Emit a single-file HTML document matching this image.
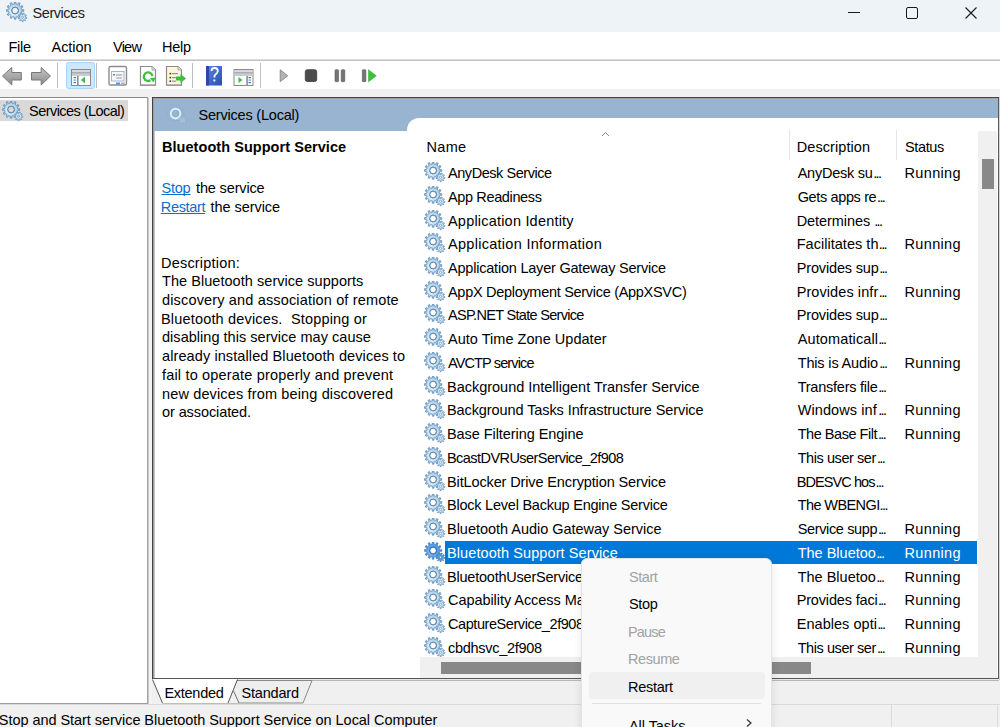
<!DOCTYPE html>
<html><head><meta charset="utf-8">
<style>
*{margin:0;padding:0;box-sizing:border-box}
html,body{width:1000px;height:727px;overflow:hidden;background:#f0f0f0;font-family:"Liberation Sans",sans-serif;font-size:14.5px;color:#000;position:relative}
.a{position:absolute}
.t{position:absolute;white-space:nowrap;line-height:16px}
.gi{position:absolute;left:424px;width:24px;height:24px}
</style></head><body>
<svg width="0" height="0" style="position:absolute">
<defs>
<radialGradient id="gb" cx="9.1" cy="8.5" r="9" fx="7" fy="10.5" gradientUnits="userSpaceOnUse"><stop offset="0" stop-color="#eefaff"/><stop offset="0.5" stop-color="#c8e8f8"/><stop offset="0.76" stop-color="#a8cbe6"/><stop offset="1" stop-color="#6f9cc8"/></radialGradient>
<radialGradient id="gs" cx="16.5" cy="15.3" r="5" gradientUnits="userSpaceOnUse"><stop offset="0" stop-color="#eef8fd"/><stop offset="0.6" stop-color="#c4def0"/><stop offset="1" stop-color="#8cb0d2"/></radialGradient>
<radialGradient id="gsel" cx="9.1" cy="8.5" r="9" fx="7" fy="10.5" gradientUnits="userSpaceOnUse"><stop offset="0" stop-color="#9ccbf3"/><stop offset="1" stop-color="#3c86d6"/></radialGradient>
<symbol id="gear" viewBox="0 0 24 24">
<path d="M15.65,7.67L17.76,7.68L17.76,9.32L15.65,9.33L15.18,11.06L17.01,12.12L16.19,13.54L14.36,12.49L13.09,13.76L14.14,15.59L12.72,16.41L11.66,14.58L9.93,15.05L9.92,17.16L8.28,17.16L8.27,15.05L6.54,14.58L5.48,16.41L4.06,15.59L5.11,13.76L3.84,12.49L2.01,13.54L1.19,12.12L3.02,11.06L2.55,9.33L0.44,9.32L0.44,7.68L2.55,7.67L3.02,5.94L1.19,4.88L2.01,3.46L3.84,4.51L5.11,3.24L4.06,1.41L5.48,0.59L6.54,2.42L8.27,1.95L8.28,-0.16L9.92,-0.16L9.93,1.95L11.66,2.42L12.72,0.59L14.14,1.41L13.09,3.24L14.36,4.51L16.19,3.46L17.01,4.88L15.18,5.94Z M12.3,8.5 A3.2,3.2 0 1 0 5.9,8.5 A3.2,3.2 0 1 0 12.3,8.5 Z" fill-rule="evenodd" fill="url(#gb)" stroke="#6a92ba" stroke-width="0.85"/>
<circle cx="9.1" cy="8.5" r="3.5" fill="none" stroke="#6c88a8" stroke-width="1"/>
<path d="M19.50,15.24L20.90,15.39L20.75,16.42L19.37,16.19L18.84,17.18L19.81,18.20L19.04,18.90L18.13,17.82L17.08,18.24L17.17,19.65L16.13,19.68L16.12,18.28L15.05,17.93L14.22,19.06L13.40,18.42L14.30,17.34L13.70,16.38L12.33,16.72L12.12,15.70L13.50,15.45L13.66,14.33L12.40,13.71L12.89,12.79L14.11,13.49L14.95,12.73L14.38,11.44L15.35,11.05L15.84,12.37L16.96,12.34L17.35,10.98L18.35,11.31L17.87,12.63L18.76,13.32L19.93,12.54L20.48,13.43L19.27,14.14Z M17.6,15.3 A1.1,1.1 0 1 0 15.4,15.3 A1.1,1.1 0 1 0 17.6,15.3 Z" fill-rule="evenodd" fill="url(#gs)" stroke="#7099c0" stroke-width="0.8"/>
</symbol>
<symbol id="gearsel" viewBox="0 0 24 24">
<path d="M15.65,7.67L17.76,7.68L17.76,9.32L15.65,9.33L15.18,11.06L17.01,12.12L16.19,13.54L14.36,12.49L13.09,13.76L14.14,15.59L12.72,16.41L11.66,14.58L9.93,15.05L9.92,17.16L8.28,17.16L8.27,15.05L6.54,14.58L5.48,16.41L4.06,15.59L5.11,13.76L3.84,12.49L2.01,13.54L1.19,12.12L3.02,11.06L2.55,9.33L0.44,9.32L0.44,7.68L2.55,7.67L3.02,5.94L1.19,4.88L2.01,3.46L3.84,4.51L5.11,3.24L4.06,1.41L5.48,0.59L6.54,2.42L8.27,1.95L8.28,-0.16L9.92,-0.16L9.93,1.95L11.66,2.42L12.72,0.59L14.14,1.41L13.09,3.24L14.36,4.51L16.19,3.46L17.01,4.88L15.18,5.94Z M12.3,8.5 A3.2,3.2 0 1 0 5.9,8.5 A3.2,3.2 0 1 0 12.3,8.5 Z" fill-rule="evenodd" fill="url(#gsel)" stroke="#3a7cc8" stroke-width="0.7"/>
<circle cx="9.1" cy="8.5" r="3.6" fill="none" stroke="#2f6fb8" stroke-width="1"/>
<path d="M19.50,15.24L20.90,15.39L20.75,16.42L19.37,16.19L18.84,17.18L19.81,18.20L19.04,18.90L18.13,17.82L17.08,18.24L17.17,19.65L16.13,19.68L16.12,18.28L15.05,17.93L14.22,19.06L13.40,18.42L14.30,17.34L13.70,16.38L12.33,16.72L12.12,15.70L13.50,15.45L13.66,14.33L12.40,13.71L12.89,12.79L14.11,13.49L14.95,12.73L14.38,11.44L15.35,11.05L15.84,12.37L16.96,12.34L17.35,10.98L18.35,11.31L17.87,12.63L18.76,13.32L19.93,12.54L20.48,13.43L19.27,14.14Z M17.6,15.3 A1.1,1.1 0 1 0 15.4,15.3 A1.1,1.1 0 1 0 17.6,15.3 Z" fill-rule="evenodd" fill="#5a9ee0" stroke="#3f82cc" stroke-width="0.7"/>
</symbol>
</defs></svg>
<div class="a" style="left:0;top:0;width:1000px;height:32px;background:#eef3f7"></div>
<svg class="a" style="left:6px;top:2px" width="24" height="24"><use href="#gear"/></svg>
<div class="a" style="left:848px;top:12px;width:12px;height:1px;background:#1a1a1a"></div>
<div class="a" style="left:906px;top:7px;width:12px;height:12px;border:1px solid #1a1a1a;border-radius:2px"></div>
<svg class="a" style="left:964px;top:6px" width="14" height="14"><path d="M1.5,1.5L12.5,12.5M12.5,1.5L1.5,12.5" stroke="#1a1a1a" stroke-width="1.1"/></svg>
<div class="a" style="left:0;top:32px;width:1000px;height:27px;background:#fff"></div>
<div class="a" style="left:0;top:59px;width:1000px;height:1px;background:#dcdcdc"></div>
<div class="a" style="left:0;top:60px;width:1000px;height:1px;background:#c4c4c4"></div>
<div class="a" style="left:0;top:61px;width:1000px;height:28px;background:#fff"></div>

<svg class="a" style="left:0;top:60px" width="400" height="30" viewBox="0 60 400 30">
<defs>
<linearGradient id="ar" x1="0" y1="0" x2="0" y2="1"><stop offset="0" stop-color="#c4c4c4"/><stop offset="1" stop-color="#8c8c8c"/></linearGradient>
<linearGradient id="hb" x1="0" y1="0" x2="1" y2="1"><stop offset="0" stop-color="#5a86e0"/><stop offset="1" stop-color="#2c4cb4"/></linearGradient>
</defs>
<!-- back -->
<path d="M2.5,76 L11.8,67.5 L11.8,72.5 L21.3,72.5 L21.3,80 L11.8,80 L11.8,85 Z" fill="url(#ar)" stroke="#777" stroke-width="1" stroke-linejoin="round"/>
<path d="M50.5,76 L41.2,67.5 L41.2,72.5 L31.5,72.5 L31.5,80 L41.2,80 L41.2,85 Z" fill="url(#ar)" stroke="#777" stroke-width="1" stroke-linejoin="round"/>
<rect x="57" y="63" width="1" height="25" fill="#bdbdbd"/>
<!-- toggle -->
<rect x="66.5" y="62.5" width="28" height="26" rx="2" fill="#cce8ff" stroke="#a6d4fa"/>
<rect x="71.5" y="69.5" width="19" height="16" fill="#fff" stroke="#8a8a8a"/>
<rect x="72" y="70" width="18" height="2.5" fill="#d8d8d8"/>
<rect x="72" y="72.5" width="18" height="1" fill="#6e6e80"/>
<rect x="72" y="73.5" width="18" height="2.5" fill="#c6ccd6"/>
<rect x="77" y="76" width="1.6" height="9.5" fill="#8a8e98"/>
<rect x="73.5" y="77" width="2.5" height="1.2" fill="#3b7cc4"/>
<rect x="73.5" y="79.5" width="2.5" height="1.2" fill="#6e9cd0"/>
<rect x="73.5" y="82" width="2.5" height="1.2" fill="#3b7cc4"/>
<path d="M81,80 L85,76.5 L85,83.5 Z" fill="#3cbf3c"/>
<rect x="96" y="63" width="1" height="25" fill="#bdbdbd"/>
<!-- properties -->
<rect x="109" y="66.5" width="17.5" height="18.5" rx="1.5" fill="#fff" stroke="#8c8c8c" stroke-width="1.4"/>
<rect x="111.5" y="71.5" width="12.5" height="9.5" fill="#f6f8fb" stroke="#a9b4c4" stroke-width="1"/>
<rect x="116" y="74.5" width="6" height="1" fill="#8c8c8c"/>
<rect x="116" y="77.5" width="6" height="1" fill="#9a9a9a"/>
<rect x="113" y="74" width="2" height="1.5" fill="#3a8ee6"/>
<rect x="116" y="82.5" width="4" height="2" fill="#3a9af0"/>
<rect x="121" y="82.5" width="4" height="2" fill="#b0b0b0"/>
<!-- refresh doc -->
<path d="M140.5,66.5 L152,66.5 L155.5,70 L155.5,85.5 L140.5,85.5 Z" fill="#fff" stroke="#8c8c8c" stroke-width="1.2"/><rect x="140" y="84.3" width="16" height="1.7" fill="#9a9a9a"/>
<path d="M152,66.5 L152,70 L155.5,70" fill="#e0e0e0" stroke="#9a9a9a" stroke-width="0.8"/>
<path d="M152.4,76.2 A4.3,4.3 0 1 0 150.4,80.3" fill="none" stroke="#3cbf3c" stroke-width="2.3"/>
<path d="M149.8,78.2 L155.4,77.6 L153.6,82.6 Z" fill="#3cbf3c"/>
<!-- export -->
<path d="M166.5,66.5 L178,66.5 L181.5,70 L181.5,85.5 L166.5,85.5 Z" fill="#fcf4dc" stroke="#8c8c8c" stroke-width="1.2"/><rect x="166" y="84.3" width="16" height="1.7" fill="#9a9a9a"/>
<path d="M178,66.5 L178,70 L181.5,70" fill="#e6e0d0" stroke="#9a9a9a" stroke-width="0.8"/>
<circle cx="170.3" cy="73.6" r="0.9" fill="#333"/><circle cx="170.3" cy="77.6" r="0.9" fill="#333"/><circle cx="170.3" cy="81.2" r="0.9" fill="#333"/>
<rect x="172" y="73" width="6" height="1.2" fill="#8a94a6"/><rect x="172" y="77" width="4" height="1.2" fill="#8a94a6"/><rect x="172" y="80.6" width="4" height="1.2" fill="#8a94a6"/>
<path d="M176,76.5 L180.5,76.5 L180.5,74 L186,78.5 L180.5,83 L180.5,80.5 L176,80.5 Z" fill="#3cbf3c"/>
<rect x="192" y="63" width="1" height="25" fill="#bdbdbd"/>
<!-- help -->
<rect x="206" y="66" width="16" height="19.5" fill="url(#hb)"/>
<rect x="206" y="66" width="3" height="19.5" fill="#2a48a8"/>
<path d="M211.5,71 Q211.5,68 214.5,68 Q217.8,68 217.8,71 Q217.8,73 215.5,74.5 Q214.3,75.5 214.3,77.5" fill="none" stroke="#fff" stroke-width="1.8"/>
<rect x="213.4" y="79.5" width="1.9" height="1.9" fill="#fff"/>
<!-- window play -->
<rect x="234" y="69.5" width="19" height="16" fill="#fff" stroke="#8a8a8a"/>
<rect x="234.5" y="70" width="18" height="2.5" fill="#d8d8d8"/>
<rect x="234.5" y="72.5" width="18" height="1" fill="#6e6e80"/>
<rect x="234.5" y="73.5" width="18" height="2.5" fill="#c6ccd6"/>
<rect x="246.3" y="76" width="1.6" height="9.5" fill="#8a8e98"/>
<rect x="248.5" y="77" width="2.5" height="1.2" fill="#3b7cc4"/>
<rect x="248.5" y="79.5" width="2.5" height="1.2" fill="#6e9cd0"/>
<rect x="248.5" y="82" width="2.5" height="1.2" fill="#3b7cc4"/>
<path d="M238.5,77 L242.5,80 L238.5,83 Z" fill="#3cbf3c"/>
<rect x="260" y="63" width="1" height="25" fill="#c4c4c4"/>
<!-- play stop pause restart -->
<path d="M280.2,69.8 L287.8,75.8 L280.2,81.6 Z" fill="#b4b4b4" stroke="#868686" stroke-width="0.9" stroke-linejoin="round"/>
<rect x="305.3" y="69.7" width="11.4" height="11.8" rx="2" fill="#4c4c4c" stroke="#383838" stroke-width="0.8"/>
<rect x="335" y="69.7" width="3.6" height="12" rx="0.8" fill="#747474" stroke="#5c5c5c" stroke-width="0.6"/>
<rect x="341.2" y="69.7" width="3.6" height="12" rx="0.8" fill="#747474" stroke="#5c5c5c" stroke-width="0.6"/>
<rect x="362.3" y="69.7" width="3.6" height="12" rx="0.8" fill="#747474" stroke="#5c5c5c" stroke-width="0.6"/>
<path d="M368.5,69.7 L376.3,75.8 L368.5,81.8 Z" fill="#3cbf3c" stroke="#36b036" stroke-width="0.6" stroke-linejoin="round"/>
</svg>

<!-- left pane -->
<div class="a" style="left:0;top:97px;width:148px;height:607px;background:#fff;border-top:1px solid #8a8a8a;border-right:1px solid #a0a4a8;border-bottom:1px solid #9c9c9c"></div>
<div class="a" style="left:148px;top:98px;width:1px;height:606px;background:#c8c8cc"></div>
<div class="a" style="left:149px;top:97px;width:3px;height:607px;background:#f4f4f4"></div>
<div class="a" style="left:0;top:100px;width:128px;height:21px;background:#d9d9d9"></div>
<svg class="a" style="left:2px;top:101px" width="24" height="24"><use href="#gear"/></svg>
<!-- right pane -->
<div class="a" style="left:152px;top:97px;width:848px;height:583px;background:#fff"></div>
<div class="a" style="left:152px;top:97px;width:848px;height:1px;background:#454545"></div>
<div class="a" style="left:152px;top:97px;width:1px;height:582px;background:#454545"></div>
<div class="a" style="left:153px;top:98px;width:845px;height:1px;background:#a0a0a0"></div>
<div class="a" style="left:153px;top:98px;width:1px;height:580px;background:#9c9c9c"></div>
<div class="a" style="left:154px;top:131px;width:1px;height:547px;background:#c4c4c4"></div>
<div class="a" style="left:998px;top:98px;width:1px;height:581px;background:#5a5a5a"></div>
<div class="a" style="left:999px;top:97px;width:1px;height:583px;background:#d4d4d4"></div>
<div class="a" style="left:153px;top:678px;width:846px;height:1px;background:#555"></div>
<div class="a" style="left:236px;top:679px;width:763px;height:1px;background:#e8e8e8"></div>
<div class="a" style="left:236px;top:680px;width:763px;height:1px;background:#b8b8b8"></div>
<div class="a" style="left:154px;top:99px;width:844px;height:32px;background:#99b4d1"></div>
<div class="a" style="left:407px;top:118px;width:591px;height:40px;background:#fff;border-top-left-radius:12px"></div>
<svg class="a" style="left:166px;top:105px" width="24" height="24">
<path d="M15.65,7.67L17.76,7.68L17.76,9.32L15.65,9.33L15.18,11.06L17.01,12.12L16.19,13.54L14.36,12.49L13.09,13.76L14.14,15.59L12.72,16.41L11.66,14.58L9.93,15.05L9.92,17.16L8.28,17.16L8.27,15.05L6.54,14.58L5.48,16.41L4.06,15.59L5.11,13.76L3.84,12.49L2.01,13.54L1.19,12.12L3.02,11.06L2.55,9.33L0.44,9.32L0.44,7.68L2.55,7.67L3.02,5.94L1.19,4.88L2.01,3.46L3.84,4.51L5.11,3.24L4.06,1.41L5.48,0.59L6.54,2.42L8.27,1.95L8.28,-0.16L9.92,-0.16L9.93,1.95L11.66,2.42L12.72,0.59L14.14,1.41L13.09,3.24L14.36,4.51L16.19,3.46L17.01,4.88L15.18,5.94Z" fill="#9fbcd8" opacity="0.6" stroke="#6f8fb4" stroke-width="0.6" stroke-dasharray="1.2 1.6"/>
<circle cx="9.6" cy="8.6" r="4.6" fill="none" stroke="#d2eefb" stroke-width="2.4"/>
<circle cx="9.6" cy="8.6" r="3.3" fill="#99b4d1" stroke="#8aa0b8" stroke-width="0.6"/>
<path d="M19.50,15.24L20.90,15.39L20.75,16.42L19.37,16.19L18.84,17.18L19.81,18.20L19.04,18.90L18.13,17.82L17.08,18.24L17.17,19.65L16.13,19.68L16.12,18.28L15.05,17.93L14.22,19.06L13.40,18.42L14.30,17.34L13.70,16.38L12.33,16.72L12.12,15.70L13.50,15.45L13.66,14.33L12.40,13.71L12.89,12.79L14.11,13.49L14.95,12.73L14.38,11.44L15.35,11.05L15.84,12.37L16.96,12.34L17.35,10.98L18.35,11.31L17.87,12.63L18.76,13.32L19.93,12.54L20.48,13.43L19.27,14.14Z" fill="#aac4dc" opacity="0.7" stroke="#7f9cbc" stroke-width="0.6" stroke-dasharray="1 1.2"/>
</svg>
<!-- list header decorations -->
<div class="a" style="left:789px;top:130px;width:1px;height:30px;background:#e5e5e5"></div>
<div class="a" style="left:896px;top:130px;width:1px;height:30px;background:#e5e5e5"></div>
<svg class="a" style="left:601px;top:131px" width="9" height="6"><path d="M1,5L4.5,1.5L8,5" fill="none" stroke="#8a8a8a" stroke-width="1"/></svg>
<svg class="gi" style="top:162.0px" width="24" height="24"><use href="#gear"/></svg><svg class="gi" style="top:185.7px" width="24" height="24"><use href="#gear"/></svg><svg class="gi" style="top:209.5px" width="24" height="24"><use href="#gear"/></svg><svg class="gi" style="top:233.2px" width="24" height="24"><use href="#gear"/></svg><svg class="gi" style="top:257.0px" width="24" height="24"><use href="#gear"/></svg><svg class="gi" style="top:280.7px" width="24" height="24"><use href="#gear"/></svg><svg class="gi" style="top:304.4px" width="24" height="24"><use href="#gear"/></svg><svg class="gi" style="top:328.2px" width="24" height="24"><use href="#gear"/></svg><svg class="gi" style="top:351.9px" width="24" height="24"><use href="#gear"/></svg><svg class="gi" style="top:375.7px" width="24" height="24"><use href="#gear"/></svg><svg class="gi" style="top:399.4px" width="24" height="24"><use href="#gear"/></svg><svg class="gi" style="top:423.1px" width="24" height="24"><use href="#gear"/></svg><svg class="gi" style="top:446.9px" width="24" height="24"><use href="#gear"/></svg><svg class="gi" style="top:470.6px" width="24" height="24"><use href="#gear"/></svg><svg class="gi" style="top:494.4px" width="24" height="24"><use href="#gear"/></svg><svg class="gi" style="top:518.1px" width="24" height="24"><use href="#gear"/></svg><div class="a" style="left:445px;top:541px;width:532px;height:23px;background:#0078d7"></div><svg class="gi" style="top:541.8px" width="24" height="24"><use href="#gearsel"/></svg><svg class="gi" style="top:565.6px" width="24" height="24"><use href="#gear"/></svg><svg class="gi" style="top:589.3px" width="24" height="24"><use href="#gear"/></svg><svg class="gi" style="top:613.1px" width="24" height="24"><use href="#gear"/></svg><svg class="gi" style="top:636.8px" width="24" height="24"><use href="#gear"/></svg>
<!-- scrollbars -->
<div class="a" style="left:978px;top:131px;width:19px;height:547px;background:#f0f0f0"></div>
<div class="a" style="left:982px;top:158.5px;width:12px;height:30px;background:#888"></div>
<div class="a" style="left:420px;top:657px;width:558px;height:21px;background:#f0f0f0"></div>
<div class="a" style="left:441px;top:662px;width:370px;height:12px;background:#888"></div>
<!-- tabs -->
<svg class="a" style="left:150px;top:678px" width="170" height="28">
<path d="M87,3 L162,3 L153,25 L89,25 L83,12 Z" fill="#eeeeee"/>
<path d="M87,2.5 L162,2.5 L153,25 L89,25" fill="none" stroke="#8a8a8a" stroke-width="1"/>
<path d="M2.5,1.5 L12.5,25 L78,25 L87,1.5 Z" fill="#fff"/>
<path d="M2.5,1.5 L12.5,25 M78,25 L87.5,1.5" fill="none" stroke="#555" stroke-width="1"/>
<path d="M12.5,25.5 L89,25.5" stroke="#bdbdbd" stroke-width="1"/>
<path d="M83.5,13 L89,25" fill="none" stroke="#707070" stroke-width="1"/>
</svg>
<!-- status bar -->
<div class="a" style="left:0;top:704px;width:1000px;height:1px;background:#dadada"></div>
<div class="a" style="left:891px;top:705px;width:1px;height:22px;background:#dadada"></div>
<div class="a" style="left:997px;top:705px;width:1px;height:22px;background:#dadada"></div>
<!-- context menu -->
<div class="a" style="z-index:10;left:581px;top:558px;width:191px;height:200px;background:#f9f9f9;border:1px solid #e3e3e3;border-radius:6px;box-shadow:0 3px 8px rgba(0,0,0,0.10)"></div>
<div class="a" style="z-index:10;left:589px;top:672px;width:176px;height:27px;background:#f0f0f0;border-radius:4px"></div>
<div class="a" style="z-index:10;left:592px;top:703px;width:169px;height:1px;background:#e0e0e0"></div>
<svg class="a" style="z-index:10;left:744px;top:718px" width="10" height="10"><path d="M3,1.5L7,5L3,8.5" fill="none" stroke="#333" stroke-width="1.2"/></svg>
<div class="t" style="left:32.60px;top:5.0px;letter-spacing:-0.464px;color:#1c1c1c">Services</div>
<div class="t" style="left:8.40px;top:39.0px;letter-spacing:-0.233px;">File</div>
<div class="t" style="left:51.60px;top:39.0px;letter-spacing:-0.087px;">Action</div>
<div class="t" style="left:113.00px;top:39.0px;letter-spacing:-0.765px;">View</div>
<div class="t" style="left:162.00px;top:39.0px;letter-spacing:-0.252px;">Help</div>
<div class="t" style="left:29.00px;top:103.4px;letter-spacing:-0.541px;">Services (Local)</div>
<div class="t" style="left:198.50px;top:107.4px;letter-spacing:-0.201px;">Services (Local)</div>
<div class="t" style="left:162.00px;top:139.0px;letter-spacing:0.049px;font-weight:bold;">Bluetooth Support Service</div>
<div class="t" style="left:161.50px;top:180.0px;letter-spacing:-0.221px;color:#0a6ed1;text-decoration:underline;text-decoration-skip-ink:none">Stop</div>
<div class="t" style="left:196.00px;top:180.0px;letter-spacing:-0.145px;">the service</div>
<div class="t" style="left:160.80px;top:198.6px;letter-spacing:-0.351px;color:#0a6ed1;text-decoration:underline;text-decoration-skip-ink:none">Restart</div>
<div class="t" style="left:210.60px;top:198.6px;letter-spacing:-0.065px;">the service</div>
<div class="t" style="left:161.00px;top:254.6px;letter-spacing:0.197px;">Description:</div>
<div class="t" style="left:162.00px;top:273.3px;letter-spacing:0.047px;">The Bluetooth service supports</div>
<div class="t" style="left:162.00px;top:292.0px;letter-spacing:0.157px;">discovery and association of remote</div>
<div class="t" style="left:161.00px;top:310.7px;letter-spacing:0.171px;">Bluetooth devices.&nbsp; Stopping or</div>
<div class="t" style="left:162.00px;top:329.4px;letter-spacing:0.030px;">disabling this service may cause</div>
<div class="t" style="left:162.00px;top:348.1px;letter-spacing:0.099px;">already installed Bluetooth devices to</div>
<div class="t" style="left:162.00px;top:366.8px;letter-spacing:0.175px;">fail to operate properly and prevent</div>
<div class="t" style="left:162.00px;top:385.5px;letter-spacing:0.143px;">new devices from being discovered</div>
<div class="t" style="left:162.00px;top:404.2px;letter-spacing:-0.096px;">or associated.</div>
<div class="t" style="left:426.50px;top:139.0px;letter-spacing:0.295px;">Name</div>
<div class="t" style="left:796.70px;top:139.0px;letter-spacing:0.084px;">Description</div>
<div class="t" style="left:905.00px;top:139.0px;letter-spacing:-0.371px;">Status</div>
<div class="t" style="left:448.00px;top:165.0px;letter-spacing:-0.453px;">AnyDesk Service</div>
<div class="t" style="left:797.70px;top:165.0px;letter-spacing:-0.244px;">AnyDesk su</div>
<div class="t" style="left:873.20px;top:165.0px;letter-spacing:-1.629px;">...</div>
<div class="t" style="left:904.50px;top:165.0px;letter-spacing:0.342px;">Running</div>
<div class="t" style="left:448.00px;top:188.7px;letter-spacing:-0.366px;">App Readiness</div>
<div class="t" style="left:797.70px;top:188.7px;letter-spacing:-0.368px;">Gets apps re</div>
<div class="t" style="left:877.00px;top:188.7px;letter-spacing:-1.629px;">...</div>
<div class="t" style="left:448.00px;top:212.5px;letter-spacing:0.202px;">Application Identity</div>
<div class="t" style="left:796.70px;top:212.5px;letter-spacing:-0.065px;">Determines</div>
<div class="t" style="left:874.20px;top:212.5px;letter-spacing:-1.629px;">...</div>
<div class="t" style="left:448.00px;top:236.2px;letter-spacing:0.285px;">Application Information</div>
<div class="t" style="left:796.70px;top:236.2px;letter-spacing:0.029px;">Facilitates th</div>
<div class="t" style="left:878.80px;top:236.2px;letter-spacing:-1.629px;">...</div>
<div class="t" style="left:904.50px;top:236.2px;letter-spacing:0.342px;">Running</div>
<div class="t" style="left:448.00px;top:260.0px;letter-spacing:-0.212px;">Application Layer Gateway Service</div>
<div class="t" style="left:796.70px;top:260.0px;letter-spacing:-0.151px;">Provides sup</div>
<div class="t" style="left:879.20px;top:260.0px;letter-spacing:-1.629px;">...</div>
<div class="t" style="left:448.00px;top:283.7px;letter-spacing:-0.297px;">AppX Deployment Service (AppXSVC)</div>
<div class="t" style="left:796.70px;top:283.7px;letter-spacing:0.079px;">Provides infr</div>
<div class="t" style="left:878.80px;top:283.7px;letter-spacing:-1.629px;">...</div>
<div class="t" style="left:904.50px;top:283.7px;letter-spacing:0.342px;">Running</div>
<div class="t" style="left:448.00px;top:307.4px;letter-spacing:-0.689px;">ASP.NET State Service</div>
<div class="t" style="left:796.70px;top:307.4px;letter-spacing:-0.151px;">Provides sup</div>
<div class="t" style="left:879.20px;top:307.4px;letter-spacing:-1.629px;">...</div>
<div class="t" style="left:448.00px;top:331.2px;letter-spacing:0.028px;">Auto Time Zone Updater</div>
<div class="t" style="left:797.70px;top:331.2px;letter-spacing:0.122px;">Automaticall</div>
<div class="t" style="left:878.20px;top:331.2px;letter-spacing:-1.629px;">...</div>
<div class="t" style="left:448.00px;top:354.9px;letter-spacing:-0.872px;">AVCTP service</div>
<div class="t" style="left:797.70px;top:354.9px;letter-spacing:-0.154px;">This is Audio</div>
<div class="t" style="left:879.20px;top:354.9px;letter-spacing:-1.629px;">...</div>
<div class="t" style="left:904.50px;top:354.9px;letter-spacing:0.342px;">Running</div>
<div class="t" style="left:447.00px;top:378.7px;letter-spacing:-0.015px;">Background Intelligent Transfer Service</div>
<div class="t" style="left:797.70px;top:378.7px;letter-spacing:-0.238px;">Transfers file</div>
<div class="t" style="left:878.20px;top:378.7px;letter-spacing:-1.629px;">...</div>
<div class="t" style="left:447.00px;top:402.4px;letter-spacing:-0.091px;">Background Tasks Infrastructure Service</div>
<div class="t" style="left:797.70px;top:402.4px;letter-spacing:0.096px;">Windows inf</div>
<div class="t" style="left:878.20px;top:402.4px;letter-spacing:-1.629px;">...</div>
<div class="t" style="left:904.50px;top:402.4px;letter-spacing:0.342px;">Running</div>
<div class="t" style="left:447.00px;top:426.1px;letter-spacing:-0.068px;">Base Filtering Engine</div>
<div class="t" style="left:797.70px;top:426.1px;letter-spacing:-0.466px;">The Base Filt</div>
<div class="t" style="left:877.90px;top:426.1px;letter-spacing:-1.629px;">...</div>
<div class="t" style="left:904.50px;top:426.1px;letter-spacing:0.342px;">Running</div>
<div class="t" style="left:447.00px;top:449.9px;letter-spacing:-0.555px;">BcastDVRUserService_2f908</div>
<div class="t" style="left:797.70px;top:449.9px;letter-spacing:-0.431px;">This user ser</div>
<div class="t" style="left:876.90px;top:449.9px;letter-spacing:-1.629px;">...</div>
<div class="t" style="left:447.00px;top:473.6px;letter-spacing:-0.126px;">BitLocker Drive Encryption Service</div>
<div class="t" style="left:796.70px;top:473.6px;letter-spacing:-0.921px;">BDESVC hos</div>
<div class="t" style="left:875.60px;top:473.6px;letter-spacing:-1.629px;">...</div>
<div class="t" style="left:447.00px;top:497.4px;letter-spacing:-0.229px;">Block Level Backup Engine Service</div>
<div class="t" style="left:797.70px;top:497.4px;letter-spacing:-0.588px;">The WBENGI</div>
<div class="t" style="left:879.60px;top:497.4px;letter-spacing:-1.629px;">...</div>
<div class="t" style="left:447.00px;top:521.1px;letter-spacing:-0.022px;">Bluetooth Audio Gateway Service</div>
<div class="t" style="left:797.70px;top:521.1px;letter-spacing:-0.360px;">Service supp</div>
<div class="t" style="left:877.90px;top:521.1px;letter-spacing:-1.629px;">...</div>
<div class="t" style="left:904.50px;top:521.1px;letter-spacing:0.342px;">Running</div>
<div class="t" style="left:447.00px;top:544.8px;letter-spacing:0.096px;color:#fff">Bluetooth Support Service</div>
<div class="t" style="left:797.70px;top:544.8px;letter-spacing:-0.003px;color:#fff">The Bluetoo</div>
<div class="t" style="left:876.20px;top:544.8px;letter-spacing:-1.629px;color:#fff">...</div>
<div class="t" style="left:904.50px;top:544.8px;letter-spacing:0.342px;color:#fff">Running</div>
<div class="t" style="left:447.00px;top:568.6px;letter-spacing:-0.221px;">BluetoothUserService_2f908</div>
<div class="t" style="left:797.70px;top:568.6px;letter-spacing:-0.003px;">The Bluetoo</div>
<div class="t" style="left:876.20px;top:568.6px;letter-spacing:-1.629px;">...</div>
<div class="t" style="left:904.50px;top:568.6px;letter-spacing:0.342px;">Running</div>
<div class="t" style="left:448.00px;top:592.3px;letter-spacing:-0.057px;">Capability Access Manager Service</div>
<div class="t" style="left:796.70px;top:592.3px;letter-spacing:-0.165px;">Provides faci</div>
<div class="t" style="left:877.90px;top:592.3px;letter-spacing:-1.629px;">...</div>
<div class="t" style="left:904.50px;top:592.3px;letter-spacing:0.342px;">Running</div>
<div class="t" style="left:448.00px;top:616.1px;letter-spacing:-0.433px;">CaptureService_2f908</div>
<div class="t" style="left:796.70px;top:616.1px;letter-spacing:0.047px;">Enables opti</div>
<div class="t" style="left:877.20px;top:616.1px;letter-spacing:-1.629px;">...</div>
<div class="t" style="left:904.50px;top:616.1px;letter-spacing:0.342px;">Running</div>
<div class="t" style="left:448.00px;top:639.8px;letter-spacing:-0.290px;">cbdhsvc_2f908</div>
<div class="t" style="left:797.70px;top:639.8px;letter-spacing:-0.431px;">This user ser</div>
<div class="t" style="left:876.90px;top:639.8px;letter-spacing:-1.629px;">...</div>
<div class="t" style="left:904.50px;top:639.8px;letter-spacing:0.342px;">Running</div>
<div class="t" style="left:164.40px;top:684.6px;letter-spacing:-0.258px;">Extended</div>
<div class="t" style="left:241.40px;top:684.6px;letter-spacing:-0.169px;">Standard</div>
<div class="t" style="left:-1.20px;top:711.5px;letter-spacing:-0.049px;">Stop and Start service Bluetooth Support Service on Local Computer</div>
<div class="t" style="left:629.00px;top:569.0px;letter-spacing:-0.448px;color:#a2a2a2;z-index:11">Start</div>
<div class="t" style="left:629.00px;top:596.3px;letter-spacing:-0.321px;z-index:11">Stop</div>
<div class="t" style="left:628.00px;top:623.5px;letter-spacing:-0.812px;color:#a2a2a2;z-index:11">Pause</div>
<div class="t" style="left:628.00px;top:651.0px;letter-spacing:-0.426px;color:#a2a2a2;z-index:11">Resume</div>
<div class="t" style="left:628.00px;top:678.6px;letter-spacing:-0.285px;z-index:11">Restart</div>
<div class="t" style="left:629.00px;top:718.0px;letter-spacing:-0.057px;z-index:11">All Tasks</div>

</body></html>
